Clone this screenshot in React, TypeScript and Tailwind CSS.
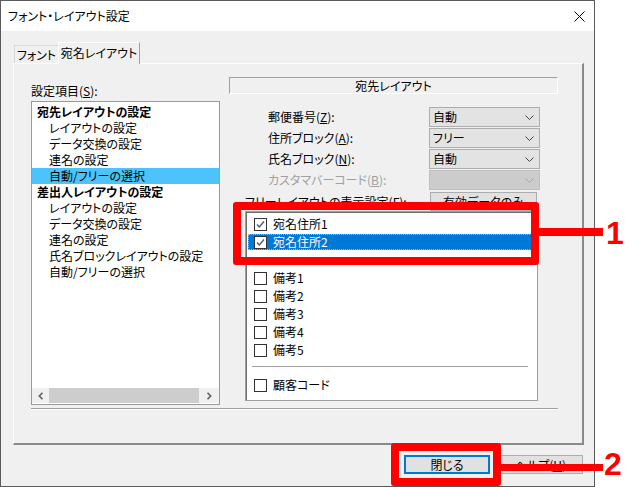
import React from "react";

const FONT = "font-['Noto_Sans_CJK_JP',sans-serif] [font-feature-settings:'palt']";

function Mn({ k }: { k: string }) {
  return <span className="underline underline-offset-[1px]">{k}</span>;
}

function Chevron({ color = "#444" }: { color?: string }) {
  return (
    <svg width="9" height="5" viewBox="0 0 9 5" className="shrink-0">
      <path d="M0.5 0.5 L4.5 4.5 L8.5 0.5" fill="none" stroke={color} strokeWidth="1" />
    </svg>
  );
}

function Combo({ value, disabled }: { value?: string; disabled?: boolean }) {
  return (
    <div
      className={
        "flex h-[20px] w-[111px] items-center justify-between pl-[3px] pr-[5px] border " +
        (disabled ? "bg-[#cccccc] border-[#bfbfbf]" : "bg-[#e3e3e3] border-[#adadad]")
      }
    >
      <span className="leading-none">{value}</span>
      <Chevron color={disabled ? "#a8a8a8" : "#444"} />
    </div>
  );
}

function CheckBox({ checked }: { checked?: boolean }) {
  return (
    <div className="flex h-[13px] w-[13px] shrink-0 items-center justify-center border border-[#333] bg-white">
      {checked && (
        <svg width="11" height="11" viewBox="0 0 11 11">
          <path d="M2 5.5 L4.3 8 L9 2.5" fill="none" stroke="#555" strokeWidth="1.3" />
        </svg>
      )}
    </div>
  );
}

function CheckRow({ label, checked, selected }: { label?: string; checked?: boolean; selected?: boolean }) {
  return (
    <div className="h-[18px] pt-[2px]">
      <div
        className={
          "flex h-[16px] items-center gap-[6px] pl-[6px] " +
          (selected ? "bg-[#0078d7] text-white outline outline-1 outline-dotted outline-[#f2a65a] -outline-offset-1" : "")
        }
      >
        {label !== undefined && <CheckBox checked={checked} />}
        {label !== undefined && <span className="leading-none">{label}</span>}
      </div>
    </div>
  );
}

const listItems: { t: string; bold?: boolean; sel?: boolean }[] = [
  { t: "宛先レイアウトの設定", bold: true },
  { t: "レイアウトの設定" },
  { t: "データ交換の設定" },
  { t: "連名の設定" },
  { t: "自動/フリーの選択", sel: true },
  { t: "差出人レイアウトの設定", bold: true },
  { t: "レイアウトの設定" },
  { t: "データ交換の設定" },
  { t: "連名の設定" },
  { t: "氏名ブロックレイアウトの設定" },
  { t: "自動/フリーの選択" },
];

export default function App() {
  return (
    <div className={"relative h-[487px] w-[630px] overflow-hidden bg-white text-[12px] text-black " + FONT}>
      {/* dialog window */}
      <div className="flex h-[487px] w-[595px] flex-col border border-[#5a5a5a] bg-[#f0f0f0]">
        {/* title bar */}
        <div className="flex h-[30px] shrink-0 items-center justify-between bg-white pl-[7px] pr-[9px]">
          <span>フォント・レイアウト設定</span>
          <svg width="11" height="11" viewBox="0 0 11 11">
            <path d="M0.5 0.5 L10.5 10.5 M10.5 0.5 L0.5 10.5" stroke="#000" strokeWidth="1" />
          </svg>
        </div>

        {/* tabs + panel */}
        <div className="flex flex-col pl-[12px] pt-[11px]">
          <div className="flex h-[21px] items-end">
            <div className="ml-[1px] flex h-[18px] w-[44px] items-center justify-center border-l border-t border-[#d9d9d9] pt-[1px]">
              フォント
            </div>
            <div className="relative z-10 -mb-[1px] flex h-[22px] w-[82px] items-center justify-center border-l border-r border-t border-l-white border-t-white border-r-[#a0a0a0] bg-[#f0f0f0] pb-[2px]">
              宛名レイアウト
            </div>
          </div>

          <div className="h-[382px] w-[571px] border-l border-t border-l-white border-t-white border-r-2 border-b-2 border-r-[#8a8a8a] border-b-[#8a8a8a] pl-[17px]">
            <div className="flex gap-[9px]">
              {/* left column */}
              <div className="flex w-[189px] flex-col">
                <div className="mt-[19px] h-[16px] leading-[16px]">
                  設定項目(<Mn k="S" />):
                </div>
                <div className="mt-[2px] flex h-[304px] flex-col border border-[#9a9a9a] bg-white">
                  <div className="flex flex-col pt-[2px]">
                    {listItems.map((it, i) => (
                      <div
                        key={i}
                        className={
                          "h-[16px] leading-[16px] whitespace-nowrap " +
                          (it.bold ? "pl-[5px] font-bold " : "pl-[17px] ") +
                          (it.sel ? "bg-[#4dc3fb]" : "")
                        }
                      >
                        {it.t}
                      </div>
                    ))}
                  </div>
                  <div className="flex-1" />
                  <div className="mb-[1px] flex h-[15px] items-center bg-[#f0f0f0]">
                    <div className="flex w-[17px] justify-center">
                      <svg width="6" height="8" viewBox="0 0 6 8">
                        <path d="M4.5 0.8 L1.3 4 L4.5 7.2" fill="none" stroke="#606060" strokeWidth="1.6" />
                      </svg>
                    </div>
                    <div className="h-[15px] flex-1 bg-[#cdcdcd]" />
                    <div className="flex w-[20px] justify-center">
                      <svg width="6" height="8" viewBox="0 0 6 8">
                        <path d="M1.5 0.8 L4.7 4 L1.5 7.2" fill="none" stroke="#606060" strokeWidth="1.6" />
                      </svg>
                    </div>
                  </div>
                </div>
              </div>

              {/* right column */}
              <div className="flex w-[329px] flex-col">
                <div className="mt-[13px] flex h-[17px] items-center justify-center border-l border-t border-r border-b border-l-[#a0a0a0] border-t-[#a0a0a0] border-r-white border-b-white">
                  宛先レイアウト
                </div>

                <div className="mt-[13px] flex flex-col gap-[1px]">
                  <div className="flex items-center">
                    <div className="w-[200px] pl-[39px]">郵便番号(<Mn k="Z" />):</div>
                    <Combo value="自動" />
                  </div>
                  <div className="flex items-center">
                    <div className="w-[200px] pl-[39px]">住所ブロック(<Mn k="A" />):</div>
                    <Combo value="フリー" />
                  </div>
                  <div className="flex items-center">
                    <div className="w-[200px] pl-[39px]">氏名ブロック(<Mn k="N" />):</div>
                    <Combo value="自動" />
                  </div>
                  <div className="flex items-center">
                    <div className="w-[200px] pl-[39px] text-[#a0a0a0]">カスタマバーコード(<Mn k="B" />):</div>
                    <Combo disabled />
                  </div>
                </div>

                <div className="mt-[2px] flex h-[19px] items-center">
                  <div className="w-[201px] pl-[16px] whitespace-nowrap">フリーレイアウトの表示設定(<Mn k="F" />):</div>
                  <div className="flex h-[19px] w-[107px] items-center justify-center border border-[#adadad] bg-[#e1e1e1]">
                    有効データのみ
                  </div>
                </div>

                <div className="ml-[16px] h-[190px] w-[293px] border border-[#a0a0a0] bg-white shadow-[inset_1px_1px_0_#6d6d6d] pl-[2px] pr-[5px] pt-[2px]">
                  <CheckRow label="宛名住所1" checked />
                  <CheckRow label="宛名住所2" checked selected />
                  <CheckRow />
                  <CheckRow label="備考1" />
                  <CheckRow label="備考2" />
                  <CheckRow label="備考3" />
                  <CheckRow label="備考4" />
                  <CheckRow label="備考5" />
                  <div className="mx-[4px] mt-[8px] h-[2px] border-t border-b border-t-[#a0a0a0] border-b-white" />
                  <div className="mt-[7px]">
                    <CheckRow label="顧客コード" />
                  </div>
                </div>
              </div>
            </div>
            <div className="mt-[3px] h-[2px] w-[527px] border-t border-b border-t-[#a0a0a0] border-b-white" />
          </div>
        </div>

        {/* buttons */}
        <div className="mt-[10px] flex justify-end gap-[8px] pr-[11px]">
          <div className="flex h-[19px] w-[86px] items-center justify-center border-2 border-[#0078d7] bg-[#e1e1e1]">
            閉じる
          </div>
          <div className="flex h-[19px] w-[85px] items-center justify-center border border-[#adadad] bg-[#e1e1e1]">
            ヘルプ(<Mn k="H" />)
          </div>
        </div>
      </div>

      {/* annotations */}
      <div className="absolute left-[233px] top-[202px] h-[63px] w-[306px] rounded-[3px] border-[8px] border-[#ff0000]" />
      <div className="absolute left-[538px] top-[228px] h-[8px] w-[65px] bg-[#ff0000]" />
      <div className="absolute left-[606px] top-[214px] font-['Liberation_Sans',sans-serif] text-[32px] font-bold leading-[38px] text-[#ff0000]">
        1
      </div>
      <div className="absolute left-[391px] top-[443px] h-[43px] w-[110px] rounded-[3px] border-[8px] border-[#ff0000]" />
      <div className="absolute left-[500px] top-[464px] h-[7px] w-[103px] bg-[#ff0000]" />
      <div className="absolute left-[604px] top-[445px] font-['Liberation_Sans',sans-serif] text-[32px] font-bold leading-[38px] text-[#ff0000]">
        2
      </div>
    </div>
  );
}
